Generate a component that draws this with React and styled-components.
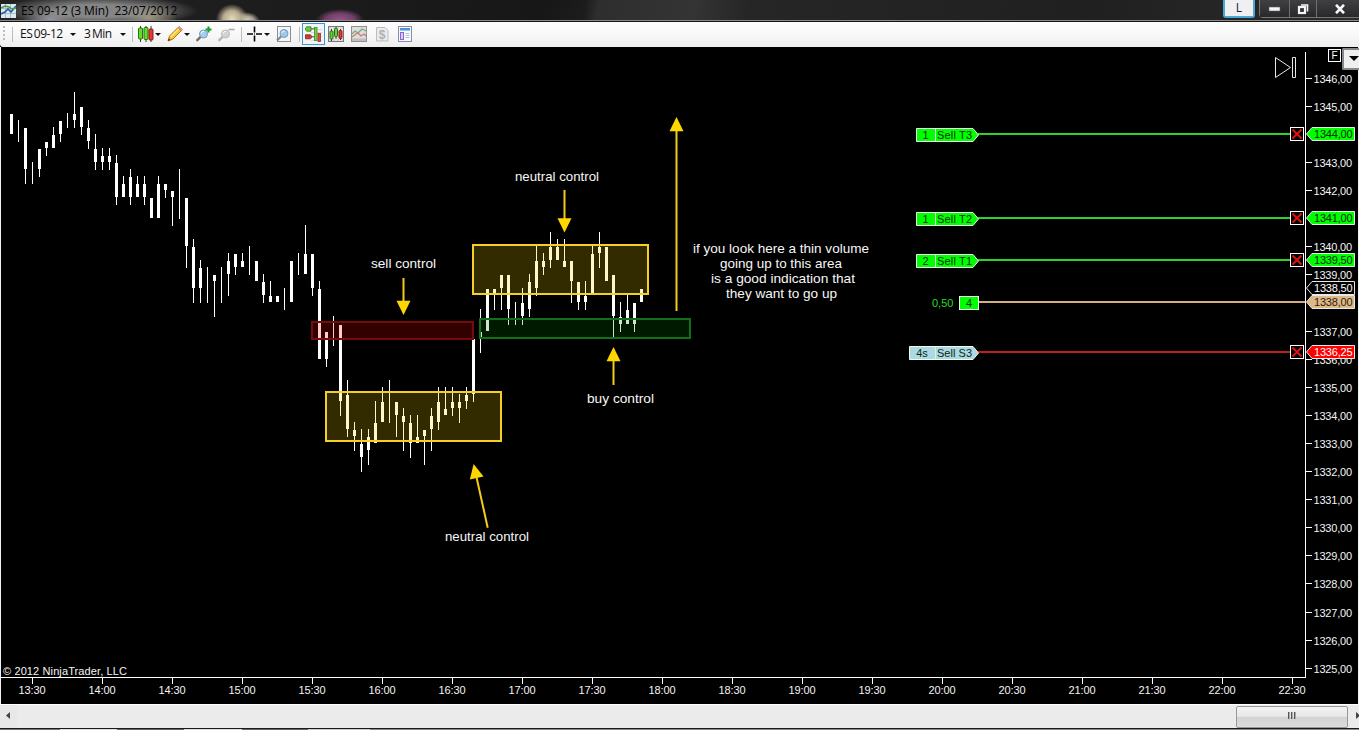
import styled, { createGlobalStyle } from "styled-components";

// [x, high, low, bodyTop, bodyBottom], a missing body is a plain wick
const candles = [
    [11, 114, 134, 114, 134],
    [18, 120, 142],
    [25, 128, 184, 128, 169],
    [32, 162, 184],
    [39, 149, 177, 149, 169],
    [46, 142, 156, 142, 148],
    [53, 127, 148, 135, 148],
    [60, 121, 142, 121, 134],
    [67, 113, 128],
    [74, 92, 128, 114, 120],
    [81, 107, 135, 107, 127],
    [88, 120, 149, 128, 141],
    [95, 134, 170, 149, 162],
    [102, 148, 170, 156, 162],
    [109, 148, 170, 156, 162],
    [116, 155, 205, 163, 197],
    [123, 176, 197, 184, 197],
    [130, 169, 205, 177, 197],
    [137, 176, 197, 184, 197],
    [144, 176, 205, 184, 197],
    [151, 198, 218, 198, 218],
    [158, 176, 218, 184, 218],
    [165, 184, 198, 184, 190],
    [172, 191, 226, 191, 197],
    [179, 169, 219],
    [186, 198, 268, 198, 246],
    [193, 239, 303, 247, 288],
    [200, 260, 303, 268, 288],
    [207, 267, 303],
    [214, 275, 317, 275, 281],
    [221, 267, 303],
    [228, 253, 296, 261, 274],
    [235, 254, 275, 254, 267],
    [242, 253, 267, 261, 267],
    [249, 246, 275],
    [256, 261, 281, 261, 281],
    [263, 274, 303, 282, 295],
    [270, 281, 302, 296, 302],
    [277, 296, 302, 296, 302],
    [284, 288, 310],
    [291, 261, 302, 261, 302],
    [298, 253, 275],
    [305, 225, 274, 254, 274],
    [312, 254, 296, 254, 288],
    [319, 281, 359, 289, 359],
    [326, 332, 367, 332, 359],
    [333, 316, 346],
    [340, 325, 416, 325, 401],
    [347, 380, 437, 395, 429],
    [354, 422, 451, 430, 436],
    [361, 429, 472, 444, 457],
    [368, 429, 465, 437, 450],
    [375, 401, 443, 423, 443],
    [382, 387, 422, 402, 422],
    [389, 380, 423],
    [396, 402, 437, 402, 415],
    [403, 408, 451, 416, 422],
    [410, 415, 458, 423, 443],
    [417, 415, 443, 437, 443],
    [424, 430, 465, 430, 436],
    [431, 408, 451, 416, 429],
    [438, 387, 430, 402, 422],
    [445, 387, 415, 409, 415],
    [452, 387, 416, 402, 408],
    [459, 394, 423, 402, 408],
    [466, 387, 409, 395, 401],
    [473, 339, 402, 339, 394],
    [480, 309, 353, 332, 337],
    [487, 289, 331, 289, 331],
    [494, 289, 310, 289, 295],
    [501, 275, 310, 275, 288],
    [508, 275, 325, 275, 309],
    [515, 302, 325],
    [522, 288, 325, 303, 316],
    [529, 274, 317, 282, 309],
    [536, 246, 296, 261, 288],
    [543, 253, 275, 261, 267],
    [550, 232, 268, 247, 260],
    [557, 239, 260, 247, 260],
    [564, 239, 267, 261, 267],
    [571, 261, 303, 261, 281],
    [578, 282, 310, 282, 302],
    [585, 281, 310, 296, 302],
    [592, 246, 294, 254, 294],
    [599, 232, 268, 247, 253],
    [606, 247, 281, 247, 281],
    [613, 275, 337, 275, 316],
    [620, 302, 332, 317, 324],
    [627, 294, 324, 310, 324],
    [634, 303, 332, 303, 324],
    [641, 289, 302, 289, 302],
];

const zones = [
    { x: 311, y: 321, w: 163, h: 19, stroke: "#780a0c", fill: "#ff0000" },
    { x: 325, y: 391, w: 177, h: 51, stroke: "#f5cf26", fill: "#ffd700" },
    { x: 472, y: 244, w: 177, h: 51, stroke: "#f5cf26", fill: "#ffd700" },
    { x: 479, y: 318, w: 212, h: 21, stroke: "#12701a", fill: "#008000" },
];

// tail point, then tip point
const arrows = [
    [564.5, 190, 564.5, 232.6],
    [403.5, 278, 403.5, 315],
    [613.5, 385, 613.5, 347],
    [676.5, 311, 676.5, 117],
    [487.7, 527.7, 473.6, 464],
];

// [x, baseline, width, text]
const notes = [
    [515, 181, 84, "neutral control"],
    [371, 268, 65, "sell control"],
    [587, 403, 67, "buy control"],
    [445, 541, 84, "neutral control"],
    [693, 253, 176, "if you look here a thin volume"],
    [720, 268, 122, "going up to this area"],
    [711, 283, 144, "is a good indication that"],
    [726, 298, 111, "they want to go up"],
];

const orders = [
    { x: 916, y: 134, qty: "1", name: "Sell T3", fill: "#00ff00", line: "#2bd32b" },
    { x: 916, y: 218, qty: "1", name: "Sell T2", fill: "#00ff00", line: "#2bd32b" },
    { x: 916, y: 260, qty: "2", name: "Sell T1", fill: "#00ff00", line: "#2bd32b" },
    { x: 909, y: 352, qty: "4s", name: "Sell S3", fill: "#add8e6", line: "#c01c1c" },
];

const priceTags = [
    { y: 134, text: "1344,00", fill: "#00ff00", color: "#052805" },
    { y: 218, text: "1341,00", fill: "#00ff00", color: "#052805" },
    { y: 260, text: "1339,50", fill: "#00ff00", color: "#052805" },
    { y: 288, text: "1338,50", fill: "#000", color: "#fff" },
    { y: 302, text: "1338,00", fill: "#deb887", color: "#2a2010" },
    { y: 352, text: "1336,25", fill: "#ff0000", color: "#fff" },
];

const hiddenPrices = [1344, 1341, 1338];

const prices = Array.from({ length: 22 }, (_, i) => 1346 - i)
    .filter((price) => !hiddenPrices.includes(price))
    .map((price) => ({ price, y: Math.floor(78.15 + (1346 - price) * 28.1) }));

const times = Array.from({ length: 19 }, (_, i) => {
    const minutes = 13 * 60 + 30 + i * 30;
    const label = `${Math.floor(minutes / 60)}:${minutes % 60 === 0 ? "00" : "30"}`;
    return { label, x: 32 + i * 70 };
});

const Arrow = ({ points }) => {
    const [x1, y1, x2, y2] = points;
    const angle = (Math.atan2(y2 - y1, x2 - x1) * 180) / Math.PI;
    const length = Math.hypot(x2 - x1, y2 - y1);

    return (
        <g transform={`translate(${x2} ${y2}) rotate(${angle})`}>
            <line x1={-length} y1="0" x2="-12" y2="0" stroke="#f2cc18" strokeWidth="2" />
            <polygon points="0,0 -14.3,-7 -14.3,7" fill="#ffd700" />
        </g>
    );
};

const Order = ({ order }) => {
    const { x, y, qty, name, fill, line } = order;
    const top = y - 5.5;
    const bottom = y + 7.5;

    return (
        <g>
            <rect x="978" y={y - 1} width="313" height="2" fill={line} />
            <polygon
                points={`${x + 0.5},${top} 973,${top} 978.5,${y + 1} 973,${bottom} ${x + 0.5},${bottom}`}
                fill={fill}
                stroke="#e8ffe8"
            />
            <line x1="935.5" y1={top} x2="935.5" y2={bottom} stroke="#d8f5d8" />
            <ChartText x={(x + 935) / 2} y={y + 5} textAnchor="middle" fill="#0b2b0b">{qty}</ChartText>
            <ChartText x="937" y={y + 5} fill="#0b2b0b" textLength="35">{name}</ChartText>
            <rect x="1290.5" y={y - 6.5} width="13" height="13" fill="#000" stroke="#fff" />
            <path d={`M1292.5 ${y - 4.5}l9 9m0 -9l-9 9`} stroke="#e01010" strokeWidth="2" />
        </g>
    );
};

const Plot = () => (
    <Drawing width="1304" height="630" viewBox="1 47 1304 630">
        <g shapeRendering="crispEdges" fill="#fff">
            {candles.map(([x, high, low, top, bottom]) => (
                <g key={x}>
                    <rect x={x} y={high} width="1" height={low - high} />
                    {top && <rect x={x - 1} y={top} width="3" height={bottom - top} />}
                </g>
            ))}
        </g>
        {zones.map((zone) => (
            <g key={`${zone.x}-${zone.y}`}>
                <rect x={zone.x} y={zone.y} width={zone.w} height={zone.h} fill={zone.fill} fillOpacity="0.2" />
                <rect
                    x={zone.x + 1}
                    y={zone.y + 1}
                    width={zone.w - 2}
                    height={zone.h - 2}
                    fill="none"
                    stroke={zone.stroke}
                    strokeWidth="2"
                />
            </g>
        ))}
        {arrows.map((points) => (
            <Arrow key={points.join()} points={points} />
        ))}
        {notes.map(([x, y, width, text]) => (
            <NoteText key={`${x}-${y}`} x={x} y={y} textLength={width} lengthAdjust="spacingAndGlyphs">{text}</NoteText>
        ))}
        {orders.map((order) => (
            <Order key={order.name} order={order} />
        ))}

        {/* open position */}
        <rect x="979" y="301" width="326" height="2" fill="#d2b083" />
        <rect x="959.5" y="296.5" width="19" height="13" fill="#00ff00" stroke="#e8ffe8" />
        <ChartText x="969" y="307" textAnchor="middle" fill="#0b2b0b">4</ChartText>
        <ChartText x="932" y="307" fill="#22dd22">0,50</ChartText>

        {/* jump to last bar */}
        <path d="M1275.5 57.5V77.5L1290.5 67.5ZM1292.5 57.5h3v20h-3z" fill="none" stroke="#e6e6e6" />
        <ChartText x="3" y="675" textLength="124">© 2012 NinjaTrader, LLC</ChartText>
    </Drawing>
);

const PriceAxis = () => (
    <Drawing width="53" height="630" viewBox="1305 47 53 630">
        <rect x="1305" y="52" width="1" height="625" fill="#fff" />
        {prices.map(({ price, y }) => (
            <g key={price}>
                <rect x="1306" y={y} width="6" height="1" fill="#fff" />
                <ChartText x="1313.5" y={y + 5} textLength="38.5">{price},00</ChartText>
            </g>
        ))}
        {priceTags.map(({ y, text, fill, color }) => (
            <g key={text}>
                <polygon
                    points={`1306.5,${y} 1312,${y - 6.5} 1354.5,${y - 6.5} 1354.5,${y + 6.5} 1312,${y + 6.5}`}
                    fill={fill}
                    stroke="#e8e8e8"
                />
                <ChartText x="1314" y={y + 4} textLength="38.5" fill={color}>{text}</ChartText>
            </g>
        ))}
    </Drawing>
);

const TimeAxis = () => (
    <Drawing width="1357" height="27" viewBox="1 677 1357 27">
        <rect x="1" y="677" width="1305" height="1" fill="#fff" />
        {times.map(({ label, x }) => (
            <g key={label}>
                <rect x={x} y="678" width="1" height="6" fill="#fff" />
                <ChartText x={x} y="694" textAnchor="middle" textLength="27">{label}</ChartText>
            </g>
        ))}
    </Drawing>
);

const AppIcon = () => (
    <svg width="15" height="14" viewBox="0 0 15 14">
        <rect x="0" y="0" width="15" height="14" fill="#dce9f2" />
        <path d="M0 4.5h15M0 9.5h15M4.5 0v14M9.5 0v14" stroke="#a8bccb" />
        <path d="M0 10l4-2 3-3 3 3 5-6" fill="none" stroke="#2b5f9e" strokeWidth="1.6" />
        <path d="M0 4l4-2 4 1 3 2 4-1" fill="none" stroke="#3f9d4b" strokeWidth="1.5" />
    </svg>
);

const CandlesIcon = () => (
    <svg width="16" height="16" viewBox="0 0 16 16">
        <path d="M2.5 0v16M8 0v16M13 0v16" stroke="#333" />
        <rect x="0.5" y="2" width="4" height="11" rx="1" fill="#64dc2c" stroke="#28700f" />
        <rect x="6" y="1.5" width="4" height="12" rx="1" fill="#64dc2c" stroke="#28700f" />
        <rect x="11" y="3" width="4" height="11" rx="1" fill="#e33a36" stroke="#8c1a18" />
    </svg>
);

const PencilIcon = () => (
    <svg width="16" height="16" viewBox="0 0 16 16">
        <path d="M1 15l1.5-5L11 1.5l3.5 3L6 13z" fill="#f7c52e" stroke="#a9761c" />
        <path d="M3.5 11L12 2.5" stroke="#ffe787" strokeWidth="1.4" />
        <path d="M11 1.5l1.2-1 3.3 3-1 1.2z" fill="#f4a39b" stroke="#b26a5c" strokeWidth="0.7" />
        <path d="M1 15l.8-2.6L3.6 14z" fill="#333" />
    </svg>
);

const MagnifierIcon = ({ muted, sign }) => (
    <svg width="17" height="16" viewBox="0 0 17 16">
        <path d="M0.5 15l5-5" stroke={muted ? "#b4b4b4" : "#7f6c58"} strokeWidth="2.4" />
        <circle cx="7.5" cy="8" r="4" fill={muted ? "#d3d3d3" : "#a5cdee"} stroke={muted ? "#b9b9b9" : "#6d9cc4"} />
        <path d="M5 7.5a2.5 2.5 0 0 1 3-2" fill="none" stroke="#fff" />
        {sign === "plus" && <path d="M9.5 3.5h6M12.5 0.5v6" stroke="#13a02a" strokeWidth="2" />}
        {sign === "minus" && <path d="M10.5 3.5h6" stroke="#aaa" strokeWidth="1.6" />}
    </svg>
);

const CrosshairIcon = () => (
    <svg width="15" height="16" viewBox="0 0 15 16">
        <path d="M0 8h6M9 8h6M7.5 0.5v6M7.5 9.5v6" stroke="#000" strokeWidth="1.6" />
        <rect x="7" y="7.5" width="1" height="1" fill="#000" />
    </svg>
);

const ZoomPageIcon = () => (
    <svg width="16" height="16" viewBox="0 0 16 16">
        <rect x="1.5" y="0.5" width="13" height="15" fill="#f6f6f6" stroke="#8e8e8e" />
        <path d="M1 14.5l4-4" stroke="#7d8894" strokeWidth="2.2" />
        <circle cx="8" cy="7.5" r="4" fill="#9fc8ea" stroke="#6f9cc2" />
        <path d="M5.8 7a2.3 2.3 0 0 1 2.6-1.8" fill="none" stroke="#fff" />
    </svg>
);

const TraderIcon = () => (
    <svg width="17" height="17" viewBox="0 0 17 17">
        <path d="M6 3.5h11M6 6.5h11M6 10.5h11M6 14.5h11" stroke="#d8d8d8" />
        <path d="M1.5 0.8h4.5v4.4h-4.5l-1.3-2.2z" fill="#6ccc32" stroke="#348115" strokeWidth="0.8" />
        <path d="M0.5 8.8h5l1.5 2-1.5 2h-5z" fill="#d23b30" stroke="#8d1d18" strokeWidth="0.8" />
        <path d="M6 2.8h5M7 10.8h3" stroke="#555" />
        <rect x="9.5" y="1.5" width="2.5" height="13" fill="#76d53e" stroke="#3d8b1d" strokeWidth="0.8" />
        <rect x="13" y="7.5" width="2.5" height="8" fill="#df4b40" stroke="#973026" strokeWidth="0.8" />
    </svg>
);

const IndicatorsIcon = () => (
    <svg width="16" height="16" viewBox="0 0 16 16">
        <rect x="0.5" y="0.5" width="15" height="15" fill="#d7d7d7" stroke="#777" />
        <path d="M1 4h14M1 8h14M1 12h14M4 1v14M8 1v14M12 1v14" stroke="#fff" strokeWidth="0.7" />
        <path d="M3.5 3v12M8 1v12M12.5 3v11" stroke="#333" />
        <rect x="2" y="5" width="3" height="8" rx="0.8" fill="#64d82f" stroke="#26691a" />
        <rect x="6.5" y="2.5" width="3" height="8" rx="0.8" fill="#64d82f" stroke="#26691a" />
        <rect x="11" y="4.5" width="3" height="8" rx="0.8" fill="#e13b35" stroke="#8c1a18" />
    </svg>
);

const StrategyIcon = () => (
    <svg width="16" height="16" viewBox="0 0 16 16">
        <rect x="0.5" y="0.5" width="15" height="15" fill="#dedede" stroke="#8f8f8f" />
        <path d="M1 12.5h14v2.5H1z" fill="#bdbdbd" />
        <path d="M1 8l3-3 3 2 4-4 4 2" fill="none" stroke="#72ad78" strokeWidth="1.2" />
        <path d="M1 11l4-3 2-1 3 3 3-2 2 2" fill="none" stroke="#cd7977" strokeWidth="1.2" />
    </svg>
);

const DollarIcon = () => (
    <svg width="13" height="16" viewBox="0 0 13 16">
        <path d="M0.5 1.5h8.5l3 3v10.5h-11.5z" fill="#ececec" stroke="#bdbdbd" />
        <DollarText x="6.2" y="12.5" textAnchor="middle">$</DollarText>
    </svg>
);

const PropertiesIcon = () => (
    <svg width="15" height="16" viewBox="0 0 15 16">
        <rect x="0.5" y="0.5" width="13" height="15" fill="#f6f9fd" stroke="#8592a5" />
        <rect x="2" y="2" width="10" height="2.5" fill="#4f92e0" />
        <rect x="2.5" y="6.5" width="3" height="7" fill="#dcc8fa" stroke="#8c66d4" />
        <path d="M7.5 7.5h4M7.5 9.5h4M7.5 11.5h4" stroke="#bac5d3" />
    </svg>
);

const App = () => {
    return (
        <>
            <GlobalStyle />
            <Window>
                <TitleBar>
                    <TitleText>
                        <AppIcon />
                        <Title>ES 09-12 (3 Min)&nbsp; 23/07/2012</Title>
                    </TitleText>
                    <LinkButton>L</LinkButton>
                    <WindowButtons>
                        <WindowButton $width={30}>
                            <svg width="13" height="7" viewBox="0 0 13 7">
                                <rect x="1" y="2" width="11" height="4" fill="#f5f5fa" stroke="#5a5a66" strokeWidth="0.6" />
                            </svg>
                        </WindowButton>
                        <WindowButton $width={27}>
                            <svg width="12" height="12" viewBox="0 0 12 12">
                                <path d="M4 2h6.5v6.5" fill="none" stroke="#f5f5fa" strokeWidth="1.6" />
                                <rect x="2" y="4" width="6" height="6" fill="none" stroke="#f5f5fa" strokeWidth="2.2" />
                            </svg>
                        </WindowButton>
                        <WindowButton $width={46}>
                            <svg width="12" height="10" viewBox="0 0 12 10">
                                <path d="M2 0.8l8 8.4M10 0.8l-8 8.4" stroke="#f5f5fa" strokeWidth="2.6" />
                            </svg>
                        </WindowButton>
                    </WindowButtons>
                </TitleBar>

                <Toolbar>
                    <Grip />
                    <Separator $before={7} $after={7} />
                    <Picker $width={43}>ES 09-12</Picker>
                    <Caret $before={7} />
                    <Picker $width={29} $before={8}>3 Min</Picker>
                    <Caret $before={7} />
                    <Separator $before={6} $after={5} />
                    <CandlesIcon />
                    <Caret $before={1} $after={6} />
                    <PencilIcon />
                    <Caret $before={1} $after={6} />
                    <MagnifierIcon sign="plus" />
                    <Gap />
                    <MagnifierIcon sign="minus" muted />
                    <Separator $before={6} $after={5} />
                    <CrosshairIcon />
                    <Caret $before={2} $after={6} />
                    <ZoomPageIcon />
                    <Separator $before={7} $after={2} />
                    <ActiveTool>
                        <TraderIcon />
                    </ActiveTool>
                    <ToolGroup>
                        <IndicatorsIcon />
                        <StrategyIcon />
                        <DollarIcon />
                        <PropertiesIcon />
                    </ToolGroup>
                </Toolbar>

                <ChartPane>
                    <Plot />
                    <PriceAxis />
                    <TimeRow>
                        <TimeAxis />
                    </TimeRow>
                    <ChartButtons>
                        <FixedButton>F</FixedButton>
                        <MenuButton>
                            <svg width="10" height="5" viewBox="0 0 10 5">
                                <path d="M0 0h10L5 5z" fill="#000" />
                            </svg>
                        </MenuButton>
                    </ChartButtons>
                </ChartPane>

                <ScrollBar>
                    <ScrollArrow>
                        <svg width="4" height="7" viewBox="0 0 4 7">
                            <path d="M4 0v7L0 3.5z" fill="#444" />
                        </svg>
                    </ScrollArrow>
                    <ScrollTrack>
                        <Thumb>
                            <ThumbLine />
                            <ThumbLine />
                            <ThumbLine />
                        </Thumb>
                    </ScrollTrack>
                    <ScrollEnd>
                        <svg width="3" height="7" viewBox="0 0 3 7">
                            <path d="M0 0v7l3-2.5v-2z" fill="#444" />
                        </svg>
                    </ScrollEnd>
                </ScrollBar>
                <BottomEdge />
            </Window>
        </>
    );
};

const GlobalStyle = createGlobalStyle`
    * {
        box-sizing: border-box;
    }

    body {
        margin: 0;
        background: #000;
        overflow: hidden;
    }
`;

const Window = styled.div`
    width: 1359px;
    height: 730px;
    display: flex;
    flex-direction: column;
    background: #000;
    font-family: "Liberation Sans", Arial, sans-serif;
    overflow: hidden;
`;

const TitleBar = styled.header`
    height: 22px;
    flex: none;
    display: flex;
    align-items: flex-start;
    border-bottom: 1px solid #151515;
    box-shadow: inset 0 -1px 0 #8b878a;
    background:
        radial-gradient(ellipse 28px 12px at 50px 20px, #aab4c2 0%, rgba(120, 130, 145, 0.5) 60%, transparent 100%),
        radial-gradient(ellipse 28px 16px at 149px 18px, #b9aa7e 0%, rgba(150, 135, 95, 0.5) 60%, transparent 100%),
        radial-gradient(ellipse 16px 15px at 232px 19px, #e3dbc0 0%, #b5ab8c 55%, transparent 100%),
        radial-gradient(ellipse 14px 9px at 246px 21px, #e3e0d8 0%, #a8a293 55%, transparent 100%),
        radial-gradient(ellipse 24px 11px at 340px 20px, #98558a 0%, #704068 60%, transparent 100%),
        linear-gradient(100deg, #222 0%, #171717 40%, #1c1c1c 43%, #2e2e2e 44%, #343434 51%, #262626 55%, #202020 80%, #2b2b2b 100%);
`;

const TitleText = styled.div`
    height: 20px;
    width: 210px;
    padding: 1px 0 0 1px;
    display: flex;
    align-items: center;
    gap: 5px;
    background: radial-gradient(ellipse 100px 16px at 98px 11px, rgba(158, 158, 158, 0.8) 40%, rgba(120, 120, 120, 0.5) 75%, transparent 100%);
`;

const Title = styled.span`
    font: 12px/18px "Open Sans", "Noto Sans", sans-serif;
    letter-spacing: -0.1px;
    color: #000;
    white-space: pre;
`;

const LinkButton = styled.div`
    width: 32px;
    height: 18px;
    margin: 0 4px 0 auto;
    border: 2px solid #48a9d1;
    border-top: 0;
    border-radius: 0 0 3px 3px;
    background: #f0f0f2;
    color: #141a40;
    font: 12px/16px "Open Sans", sans-serif;
    text-align: center;
`;

const WindowButtons = styled.div`
    display: flex;
    width: 100px;
    height: 18px;
    border: 1px solid #77777a;
    border-width: 0 0 1px 1px;
    border-radius: 0 0 0 4px;
`;

const WindowButton = styled.div`
    width: ${({ $width }) => $width}px;
    flex: none;
    height: 17px;
    display: flex;
    align-items: center;
    justify-content: center;
    background: linear-gradient(#404043, #29292b);
    border-right: 1px solid #707073;
`;

const Toolbar = styled.div`
    height: 25px;
    flex: none;
    display: flex;
    align-items: center;
    padding: 0 0 1px 3px;
    background: linear-gradient(#fdfdfd, #f8f8f8 50%, #eeeeee);
    border-radius: 0 0 0 3px;

    svg {
        flex: none;
    }
`;

const Grip = styled.div`
    width: 2px;
    height: 16px;
    background: repeating-linear-gradient(#bdbdbd 0 2px, transparent 2px 4px);
`;

const Separator = styled.div`
    width: 1px;
    height: 15px;
    flex: none;
    margin: 0 ${({ $after }) => $after}px 0 ${({ $before }) => $before}px;
    background: #bcbcbc;
`;

const Picker = styled.span`
    width: ${({ $width }) => $width}px;
    margin-left: ${({ $before }) => $before || 0}px;
    font: 12px/20px "Open Sans", "Noto Sans", sans-serif;
    letter-spacing: -0.5px;
    word-spacing: -1px;
    color: #111;
    white-space: nowrap;
`;

const Caret = styled.i`
    flex: none;
    margin: 1px ${({ $after }) => $after || 0}px 0 ${({ $before }) => $before}px;
    border: solid transparent;
    border-width: 3px 3px 0;
    border-top-color: #111;
`;

const Gap = styled.div`
    width: 5px;
`;

const ActiveTool = styled.div`
    width: 23px;
    height: 22px;
    flex: none;
    display: flex;
    align-items: center;
    justify-content: center;
    border: 1px solid #3f93cf;
    background: #eef6fc;
`;

const ToolGroup = styled.div`
    display: flex;
    gap: 7px;
    margin-left: 3px;

    svg:nth-child(3) {
        margin: 0 2px 0 2px;
    }
`;

const ChartPane = styled.main`
    position: relative;
    height: 657px;
    flex: none;
    display: grid;
    grid-template-columns: 1304px 53px;
    grid-template-rows: 630px 27px;
    border: solid #f2f2f2;
    border-width: 0 1px;
    background: #000;
`;

const Drawing = styled.svg`
    display: block;
`;

const TimeRow = styled.div`
    grid-column: 1 / -1;
`;

const ChartText = styled.text`
    font-size: 11px;
    fill: ${({ fill }) => fill || "#f4f4f4"};
`;

const NoteText = styled.text`
    font-size: 13px;
    fill: #f7f7f7;
`;

const DollarText = styled.text`
    font-size: 12px;
    font-weight: bold;
    fill: #b0b0b0;
`;

// sits over the top of the price axis
const ChartButtons = styled.div`
    position: absolute;
    top: 1px;
    right: -1px;
    display: flex;
    align-items: flex-start;
    gap: 1px;
`;

const FixedButton = styled.div`
    width: 13px;
    height: 13px;
    margin-top: 1px;
    border: 1px solid #fff;
    background: #000;
    color: #fff;
    font-size: 10px;
    line-height: 11px;
    text-align: center;
`;

const MenuButton = styled.div`
    width: 17px;
    height: 22px;
    padding-left: 5px;
    display: flex;
    align-items: center;
    border: 2px solid #85888c;
    border-right: 0;
    border-radius: 2px 0 0 2px;
    background: #efefef;
    overflow: hidden;

    svg {
        flex: none;
        margin-top: -2px;
    }
`;

const ScrollBar = styled.div`
    height: 24px;
    flex: none;
    display: flex;
    align-items: center;
    border-top: 1px solid #fff;
    background: #ebebeb;
`;

const ScrollArrow = styled.div`
    width: 17px;
    height: 23px;
    padding: 0 0 2px 6px;
    display: flex;
    align-items: center;
    background: #e8e8e8;
`;

const ScrollTrack = styled.div`
    flex: 1;
    display: flex;
    justify-content: flex-end;
`;

const Thumb = styled.div`
    width: 112px;
    height: 22px;
    display: flex;
    align-items: center;
    justify-content: center;
    gap: 1px;
    padding-bottom: 2px;
    border: 1px solid #979797;
    border-radius: 2px;
    background: linear-gradient(#f4f4f4 0%, #e6e6e7 48%, #d2d2d4 50%, #dcdcde 100%);
`;

const ThumbLine = styled.i`
    width: 2px;
    height: 7px;
    background: linear-gradient(90deg, #555 50%, #aaa 50%);
`;

const ScrollEnd = styled.div`
    width: 11px;
    padding: 0 0 2px 8px;
    display: flex;
`;

const BottomEdge = styled.div`
    height: 2px;
    flex: none;
    border-top: 1px solid #1a1a1a;
    background: linear-gradient(90deg, #777 0 60px, #ddd 60px 117px, #666 117px 184px, #ddd 184px 242px, #666 242px 308px, #ccc 308px 370px, #888 370px);
`;

export default App;
